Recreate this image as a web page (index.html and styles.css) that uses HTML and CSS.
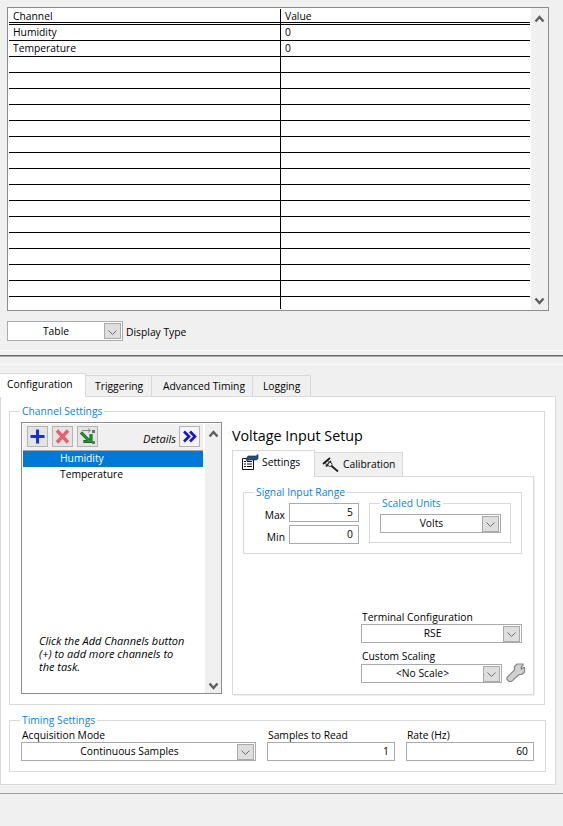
FILE: index.html
```html
<!DOCTYPE html>
<html lang="en">
<head>
<meta charset="utf-8">
<title>Voltage Input Setup</title>
<link rel="stylesheet" href="styles.css">
</head>
<body>
<section class="display">
  <div class="table-box">
    <div class="table">
      <div class="row head"><div class="cell first">Channel</div><div class="cell">Value</div></div>
      <div class="row"><div class="cell first">Humidity</div><div class="cell">0</div></div>
      <div class="row"><div class="cell first">Temperature</div><div class="cell">0</div></div>
      <div class="row"><div class="cell first"></div><div class="cell"></div></div>
      <div class="row"><div class="cell first"></div><div class="cell"></div></div>
      <div class="row"><div class="cell first"></div><div class="cell"></div></div>
      <div class="row"><div class="cell first"></div><div class="cell"></div></div>
      <div class="row"><div class="cell first"></div><div class="cell"></div></div>
      <div class="row"><div class="cell first"></div><div class="cell"></div></div>
      <div class="row"><div class="cell first"></div><div class="cell"></div></div>
      <div class="row"><div class="cell first"></div><div class="cell"></div></div>
      <div class="row"><div class="cell first"></div><div class="cell"></div></div>
      <div class="row"><div class="cell first"></div><div class="cell"></div></div>
      <div class="row"><div class="cell first"></div><div class="cell"></div></div>
      <div class="row"><div class="cell first"></div><div class="cell"></div></div>
      <div class="row"><div class="cell first"></div><div class="cell"></div></div>
      <div class="row"><div class="cell first"></div><div class="cell"></div></div>
      <div class="row"><div class="cell first"></div><div class="cell"></div></div>
      <div class="row last"><div class="cell first"></div><div class="cell"></div></div>
    </div>
    <div class="scroll">
      <svg class="chev" viewBox="0 0 11 8"><polyline points="1.5,6.5 5.5,2 9.5,6.5"/></svg>
      <svg class="chev" viewBox="0 0 11 8"><polyline points="1.5,1.5 5.5,6 9.5,1.5"/></svg>
    </div>
  </div>
  <div class="display-type">
    <div class="combo combo-table"><span class="combo-text">Table</span><span class="combo-btn"><svg viewBox="0 0 9 5"><polyline points="0.5,0.5 4.5,4.5 8.5,0.5"/></svg></span></div>
    <span class="display-label">Display Type</span>
  </div>
</section>

<div class="splitter"><div class="splitter-line"></div></div>

<nav class="tabs">
  <div class="tab active">Configuration</div>
  <div class="tab tab-trig">Triggering</div>
  <div class="tab tab-adv">Advanced Timing</div>
  <div class="tab tab-log">Logging</div>
</nav>

<main class="panel">
  <section class="group channel-group">
    <span class="legend">Channel Settings</span>
    <div class="list">
      <div class="list-main">
        <div class="toolbar">
          <span class="tool">
            <svg viewBox="0 0 19 19"><path class="plus" d="M9.500 2.500v14M2.500 9.500h14"/></svg>
          </span>
          <span class="tool">
            <svg viewBox="0 0 19 19"><path class="cross" d="M4 3.500l11 12M15 3.500l-11 12"/></svg>
          </span>
          <span class="tool">
            <svg viewBox="0 0 19 19">
              <path class="ghost" d="M4 3.500h8M10 1.500l2.500 2-2.500 2"/>
              <path class="green-edge" d="M3 5.500l9 9M5.500 14.500h7.500v-7.500"/>
              <path class="green" d="M3 5.500l9 9M5.500 14.500h7.500v-7.500"/>
              <rect class="dot" x="14" y="3" width="3" height="3"/>
              <rect class="dot" x="14" y="14" width="3" height="3"/>
            </svg>
          </span>
          <span class="details">Details</span>
          <span class="tool tool-more">
            <svg viewBox="0 0 19 19"><path class="more" d="M4 4.500l5 5-5 5M10 4.500l5 5-5 5"/></svg>
          </span>
        </div>
        <div class="item selected">Humidity</div>
        <div class="item">Temperature</div>
        <p class="hint">Click the Add Channels button (+) to add more channels to the task.</p>
      </div>
      <div class="scroll scroll-list">
        <svg class="chev" viewBox="0 0 11 8"><polyline points="1.5,6.5 5.5,2 9.5,6.5"/></svg>
        <svg class="chev" viewBox="0 0 11 8"><polyline points="1.5,1.5 5.5,6 9.5,1.5"/></svg>
      </div>
    </div>
    <div class="setup">
      <h1 class="setup-title">Voltage Input Setup</h1>
      <div class="subtabs">
        <div class="subtab active">
          <svg class="subtab-icon" viewBox="0 0 17 16">
            <path class="form" d="M0.500 4.500h11v11h-11z"/>
            <path class="form-lines" d="M2 7.500h2M5 7.500h5M2 10h2M5 10h5M2 12.500h2M5 12.500h5"/>
            <path class="pen" d="M4 5l2-3h8l2-1.500v4.500l-2 1h-7l-2 1z"/>
          </svg>
          <span>Settings</span>
        </div>
        <div class="subtab">
          <svg class="subtab-icon" viewBox="0 0 17 16">
            <path class="cal-grey" d="M2 6l4 4M5 4l4 4"/>
            <path class="cal-dark" d="M1 8l7-6M4 10.500l5-5.500M9 9.500l7 6"/>
            <circle class="cal-ring" cx="8" cy="8.500" r="2"/>
          </svg>
          <span>Calibration</span>
        </div>
      </div>
      <div class="setup-body">
        <section class="group range-group">
          <span class="legend">Signal Input Range</span>
          <div class="range-fields">
            <label class="range-row"><span>Max</span><span class="field range-field">5</span></label>
            <label class="range-row"><span>Min</span><span class="field range-field">0</span></label>
          </div>
          <section class="group units-group">
            <span class="legend">Scaled Units</span>
            <div class="combo combo-units"><span class="combo-text">Volts</span><span class="combo-btn"><svg viewBox="0 0 9 5"><polyline points="0.5,0.5 4.5,4.5 8.5,0.5"/></svg></span></div>
          </section>
        </section>
        <div class="terminal">
          <div class="caption">Terminal Configuration</div>
          <div class="combo combo-terminal"><span class="combo-text">RSE</span><span class="combo-btn"><svg viewBox="0 0 9 5"><polyline points="0.5,0.5 4.5,4.5 8.5,0.5"/></svg></span></div>
          <div class="caption caption-scaling">Custom Scaling</div>
          <div class="scaling-row">
            <div class="combo combo-scaling"><span class="combo-text">&lt;No Scale&gt;</span><span class="combo-btn"><svg viewBox="0 0 9 5"><polyline points="0.5,0.5 4.5,4.5 8.5,0.5"/></svg></span></div>
            <svg class="wrench" viewBox="0 0 20 21"><path d="M11 2h6v1.500l-2 2 .5 1.500 2-1.500h1v4.500l-2.500 2.500h-3l-7.500 7h-2.500l-2-2v-2l7.500-7.500v-3.500z"/></svg>
          </div>
        </div>
      </div>
    </div>
  </section>

  <section class="group timing-group">
    <span class="legend">Timing Settings</span>
    <div class="timing-col">
      <div class="caption">Acquisition Mode</div>
      <div class="combo combo-mode"><span class="combo-text">Continuous Samples</span><span class="combo-btn"><svg viewBox="0 0 9 5"><polyline points="0.5,0.5 4.5,4.5 8.5,0.5"/></svg></span></div>
    </div>
    <div class="timing-col">
      <div class="caption">Samples to Read</div>
      <div class="field">1</div>
    </div>
    <div class="timing-col">
      <div class="caption">Rate (Hz)</div>
      <div class="field">60</div>
    </div>
  </section>
</main>
<div class="status-line"></div>
</body>
</html>
```
FILE: styles.css
```css
* { box-sizing: border-box; }
html, body { margin: 0; padding: 0; }
body {
  width: 563px;
  height: 826px;
  overflow: hidden;
  background: #f0f0f0;
  color: #000;
  font: 10.3px/14px "Open Sans", "Noto Sans", sans-serif;
}

/* display area */
.display { padding: 7px 0 9px 7px; }
.table-box {
  display: flex;
  width: 542px;
  height: 304px;
  border: 1px solid #8b8b90;
  background: #fff;
}
.table { width: 523px; padding: 1px 1px 0 1px; }
.row {
  display: grid;
  grid-template-columns: 271px 1fr;
  height: 16px;
  border-bottom: 1px solid #000;
  line-height: 15px;
}
.head { height: 16px; border-bottom: 3px double #000; line-height: 15px; }
.last { height: 12px; border-bottom: 0; }
.cell { padding-left: 4px; border-left: 1px solid #000; }
.cell.first { border-left: 0; padding-left: 4px; }
.scroll {
  flex: 1;
  display: flex;
  flex-direction: column;
  justify-content: space-between;
  align-items: center;
  padding: 7px 0 5px;
  background: #f0f0f0;
}
.chev { width: 11px; height: 8px; }
.chev polyline { fill: none; stroke: #5f5f5f; stroke-width: 2.4; }

.display-type { display: flex; align-items: center; gap: 3px; margin-top: 10px; }
.display-label { padding-top: 2px; }

/* combos and fields */
.combo {
  display: flex;
  align-items: center;
  height: 19px;
  border: 1px solid #a9a9ae;
  background: #fff;
}
.combo-text { flex: 1; padding-bottom: 2px; text-align: center; }
.combo-btn {
  display: flex;
  align-items: center;
  justify-content: center;
  width: 17px;
  height: 16px;
  margin-right: 1px;
  border: 1px solid #a9a9a9;
  background: #dedede;
}
.combo-btn svg { width: 9px; height: 5px; margin-top: 2px; }
.combo-btn polyline { fill: none; stroke: #6a6a6a; stroke-width: 1; }
.combo-table { width: 116px; height: 20px; }
.combo-table .combo-text { padding-bottom: 0; }
.combo-units { width: 121px; margin: 10px 0 0 10px; }
.combo-terminal { width: 161px; }
.combo-scaling { width: 141px; }
.combo-mode { width: 235px; }
.field {
  height: 19px;
  padding-right: 5px;
  border: 1px solid #a9a9ae;
  background: #fff;
  text-align: right;
  line-height: 17px;
}

/* splitter */
.splitter {
  height: 15px;
  padding-top: 4px;
  border-top: 1px solid #fafafa;
  border-bottom: 1px solid #fafafa;
}
.splitter-line {
  height: 2px;
  border-top: 1px solid #6a6a6a;
  border-bottom: 1px solid #a8a8a8;
}

/* main tabs */
.tabs { display: flex; align-items: flex-end; height: 23px; margin-top: 8px; }
.tab {
  height: 21px;
  border: 1px solid #d9d9d9;
  border-left: 0;
  border-bottom: 0;
  background: #f0f0f0;
  line-height: 20px;
  white-space: nowrap;
}
.tab.active {
  position: relative;
  z-index: 1;
  width: 86px;
  height: 24px;
  margin-bottom: -1px;
  padding-left: 7px;
  background: #fff;
  line-height: 20px;
}
.tab-trig { width: 66px; padding-left: 9px; }
.tab-adv { width: 101px; padding-left: 11px; }
.tab-log { width: 58px; padding-left: 10px; }

.panel {
  width: 556px;
  height: 389px;
  padding: 14px 0 0 8px;
  border: 1px solid #d9d9d9;
  background: #fff;
}

/* group boxes */
.group { position: relative; border: 1px solid #d9d9d9; }
.legend {
  position: absolute;
  top: -8px;
  left: 10px;
  padding: 0 2px;
  background: #fff;
  color: #0a7fe0;
  line-height: 14px;
  white-space: nowrap;
}
.channel-group {
  display: flex;
  gap: 10px;
  width: 536px;
  height: 294px;
  padding: 10px 0 0 11px;
}
.timing-group {
  display: grid;
  grid-template-columns: 235px 128px 128px;
  column-gap: 11px;
  width: 537px;
  height: 52px;
  margin-top: 15px;
  padding: 7px 0 0 11px;
}
.caption { padding-left: 1px; line-height: 14px; }

/* channel list */
.list {
  display: flex;
  gap: 2px;
  width: 201px;
  height: 272px;
  padding: 1px 0 0 1px;
  border: 1px solid #8b8b90;
  background: #fff;
}
.list-main { display: flex; flex-direction: column; width: 180px; }
.scroll-list { padding: 6px 0 3px; }
.toolbar {
  display: flex;
  align-items: flex-start;
  gap: 4px;
  height: 27px;
  padding: 2px 3px 0 4px;
  border-bottom: 1px solid #a8a8a8;
  background: #f0f0f0;
}
.tool {
  width: 21px;
  height: 21px;
  border: 1px solid #b4b4b4;
  background: #e4e4e4;
}
.tool svg { display: block; width: 19px; height: 19px; }
.tool-more { background: #f4f4f4; }
.plus { fill: none; stroke: #1432d2; stroke-width: 3; }
.cross { fill: none; stroke: #e9606e; stroke-width: 3.4; }
.green { fill: none; stroke: #1f9a2a; stroke-width: 1.8; }
.green-edge { fill: none; stroke: #123f16; stroke-width: 3; }
.ghost { fill: none; stroke: #8a8a8a; stroke-width: 1; }
.dot { fill: #707070; }
.more { fill: none; stroke: #1515d8; stroke-width: 2.6; }
.details { margin: 6px -1px 0 auto; font-size: 11px; font-style: italic; line-height: 14px; }
.item { height: 16px; padding-left: 37px; line-height: 14px; }
.item.selected { background: #0078d7; color: #fff; }
.hint {
  margin: auto 0 0;
  padding: 0 17px 20px 16px;
  font-size: 11px;
  font-style: italic;
  line-height: 13px;
}

/* voltage setup */
.setup { width: 302px; }
.setup-title {
  margin: 0;
  font-size: 14.3px;
  font-weight: 400;
  line-height: 28px;
}
.subtabs { display: flex; align-items: flex-end; height: 26px; }
.subtab {
  display: flex;
  align-items: center;
  gap: 4px;
  width: 88px;
  height: 24px;
  padding: 0 0 2px 7px;
  border: 1px solid #d9d9d9;
  border-left: 0;
  border-bottom: 0;
  background: #f0f0f0;
}
.subtab.active {
  position: relative;
  z-index: 1;
  gap: 3px;
  width: 83px;
  height: 27px;
  margin-bottom: -1px;
  padding: 0 0 5px 9px;
  border-left: 1px solid #d9d9d9;
  background: #fff;
}
.subtab-icon { width: 17px; height: 16px; flex: none; }
.form { fill: #fff; stroke: #111; stroke-width: 1; }
.form-lines { fill: none; stroke: #111; stroke-width: 1; }
.pen { fill: #2c4f86; stroke: #0d2347; stroke-width: 0.6; }
.cal-dark { fill: none; stroke: #1a1a1a; stroke-width: 1.8; }
.cal-grey { fill: none; stroke: #8a8a8a; stroke-width: 1.6; }
.cal-ring { fill: #fff; stroke: #333; stroke-width: 1; }
.setup-body {
  width: 302px;
  height: 219px;
  padding: 15px 0 0 10px;
  border: 1px solid #d9d9d9;
  box-shadow: 1px 1px 0 #efefef;
}
.range-group {
  display: flex;
  gap: 10px;
  width: 279px;
  height: 62px;
  padding-top: 10px;
}
.range-fields { display: flex; flex-direction: column; gap: 3px; width: 115px; }
.range-row { display: flex; justify-content: flex-end; align-items: center; gap: 4px; }
.range-row > span:first-child { padding-top: 4px; }
.range-field { width: 70px; }
.units-group { width: 142px; height: 40px; }
.terminal { margin: 56px 0 0 118px; }
.caption-scaling { height: 15px; margin-top: 6px; }
.scaling-row { display: flex; align-items: center; gap: 4px; }
.wrench { width: 20px; height: 21px; margin-top: -3px; }
.wrench path { fill: #d0d0d0; stroke: #858585; stroke-width: 1.2; }

.status-line { height: 1px; margin-top: 8px; background: #a0a0a0; }
```
